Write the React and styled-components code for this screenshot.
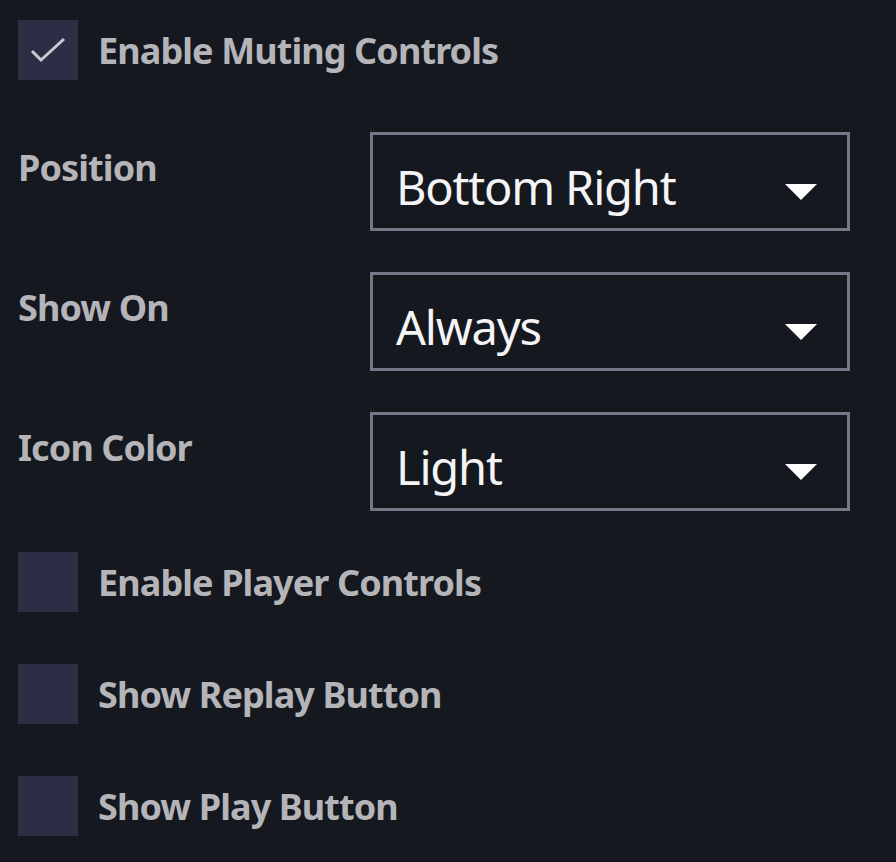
import React from "react";
import styled, { createGlobalStyle } from "styled-components";

const GlobalStyle = createGlobalStyle`
    body {
        margin: 0;
        background: #161820;
        font-family: "Noto Sans", "Open Sans", sans-serif;
    }
`;

const Panel = styled.div`
    display: flex;
    flex-direction: column;
    padding: 20px 0 0 18px;
    min-height: 842px;
    background: #161820;
`;

const CheckRow = styled.label`
    display: flex;
    align-items: center;
    gap: 20px;
    height: 60px;
    margin-bottom: 52px;
`;

const Box = styled.span`
    display: flex;
    align-items: center;
    justify-content: center;
    width: 60px;
    height: 60px;
    background: #2d2d45;
    flex-shrink: 0;
`;

const Label = styled.span`
    font-size: 36px;
    font-weight: 700;
    letter-spacing: -0.9px;
    color: #b4b4b9;
    white-space: nowrap;
`;

const SelectRow = styled.div`
    display: flex;
    align-items: flex-start;
    margin-bottom: 41px;
`;

const SelectLabel = styled(Label)`
    width: 352px;
    padding-top: 11px;
`;

const Select = styled.div`
    box-sizing: border-box;
    width: 480px;
    height: 99px;
    border: 3px solid #77778a;
    display: flex;
    align-items: center;
    justify-content: space-between;
    padding: 10px 30px 0 23px;
    font-size: 47px;
    letter-spacing: -1.2px;
    color: #f4f4f6;
`;

const CaretIcon = styled.svg`
    margin-top: 10px;
`;

const Check = () => (
    <svg width="36" height="26" viewBox="0 0 36 26">
        <path d="M2 14 L11 23 L34 2" fill="none" stroke="#c9c9d2" strokeWidth="3" />
    </svg>
);

const Caret = () => (
    <CaretIcon width="32" height="16" viewBox="0 0 32 16">
        <path d="M0 0 H32 L16 16 Z" fill="#ffffff" />
    </CaretIcon>
);

const CheckOption = ({ checked, children }) => (
    <CheckRow>
        <Box>{checked && <Check />}</Box>
        <Label>{children}</Label>
    </CheckRow>
);

const SelectOption = ({ label, value }) => (
    <SelectRow>
        <SelectLabel>{label}</SelectLabel>
        <Select>
            <span>{value}</span>
            <Caret />
        </Select>
    </SelectRow>
);

export default function App() {
    return (
        <Panel>
            <GlobalStyle />
            <CheckOption checked>Enable Muting Controls</CheckOption>
            <SelectOption label="Position" value="Bottom Right" />
            <SelectOption label="Show On" value="Always" />
            <SelectOption label="Icon Color" value="Light" />
            <CheckOption>Enable Player Controls</CheckOption>
            <CheckOption>Show Replay Button</CheckOption>
            <CheckOption>Show Play Button</CheckOption>
        </Panel>
    );
}
